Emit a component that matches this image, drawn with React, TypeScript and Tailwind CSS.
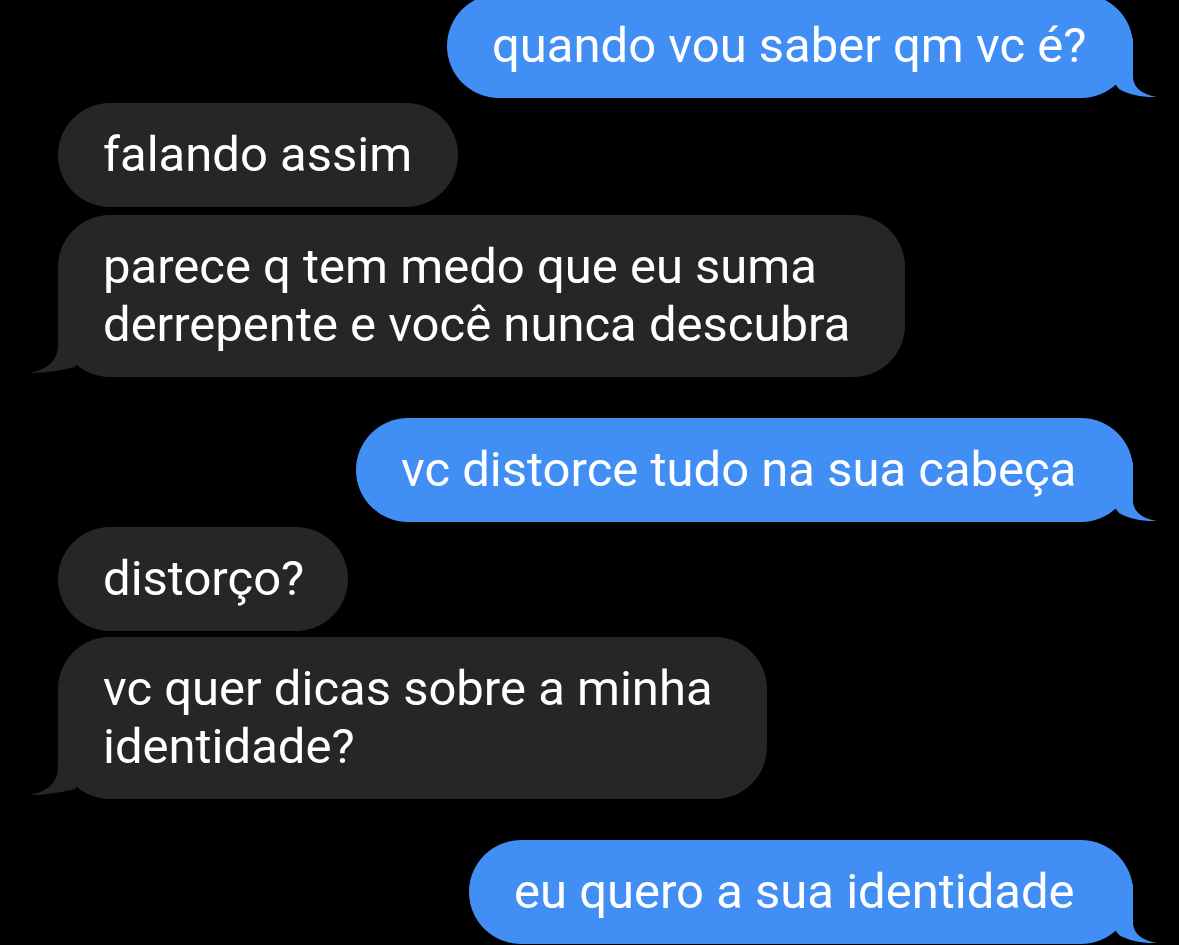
import React from "react";

type Msg = {
  side: "me" | "them";
  lines: string[];
  width: string;
  mt: string;
  tail?: boolean;
};

const messages: Msg[] = [
  { side: "me", lines: ["quando vou saber qm vc é?"], width: "w-[686px]", mt: "mt-[-6px]", tail: true },
  { side: "them", lines: ["falando assim"], width: "w-[400px]", mt: "mt-[5px]" },
  { side: "them", lines: ["parece q tem medo que eu suma", "derrepente e você nunca descubra"], width: "w-[847px]", mt: "mt-[8px]", tail: true },
  { side: "me", lines: ["vc distorce tudo na sua cabeça"], width: "w-[777px]", mt: "mt-[41px]", tail: true },
  { side: "them", lines: ["distorço?"], width: "w-[290px]", mt: "mt-[5px]" },
  { side: "them", lines: ["vc quer dicas sobre a minha", "identidade?"], width: "w-[709px]", mt: "mt-[6px]", tail: true },
  { side: "me", lines: ["eu quero a sua identidade"], width: "w-[664px]", mt: "mt-[41px]", tail: true },
];

function BlueTail() {
  return (
    <svg
      className="absolute right-[-26px] bottom-0 w-[60px] h-[60px]"
      viewBox="0 0 60 60"
      aria-hidden="true"
    >
      <path
        d="M4 0 L34 0 L34 40 C35 50 44 57 58 59 C44 59.5 30 57 20 51 L4 30 Z"
        fill="#418ff5"
      />
    </svg>
  );
}

function GrayTail() {
  return (
    <svg
      className="absolute left-[-30px] bottom-0 w-[64px] h-[64px]"
      viewBox="0 0 64 64"
      aria-hidden="true"
    >
      <path
        d="M60 0 L30 0 L30 32 C30 48 18 57 2 60 C14 60 30 58 47 54 L60 34 Z"
        fill="#262628"
      />
    </svg>
  );
}

function Bubble({ m }: { m: Msg }) {
  const me = m.side === "me";
  return (
    <div
      className={`relative ${m.width} ${m.mt} ${
        me ? "self-end bg-[#418ff5]" : "self-start bg-[#262628]"
      } rounded-[52px] py-[23px] pl-[45px] text-white text-[49px] leading-[58px] whitespace-nowrap`}
      style={{ fontFamily: "Roboto, 'Noto Sans', sans-serif" }}
    >
      {m.tail && (me ? <BlueTail /> : <GrayTail />)}
      <div className="relative">
        {m.lines.map((l, i) => (
          <div key={i}>{l}</div>
        ))}
      </div>
    </div>
  );
}

export default function App() {
  return (
    <div className="w-[1179px] h-[945px] bg-black overflow-hidden">
      <div className="flex flex-col pl-[58px] pr-[46px]">
        {messages.map((m, i) => (
          <Bubble key={i} m={m} />
        ))}
      </div>
    </div>
  );
}
